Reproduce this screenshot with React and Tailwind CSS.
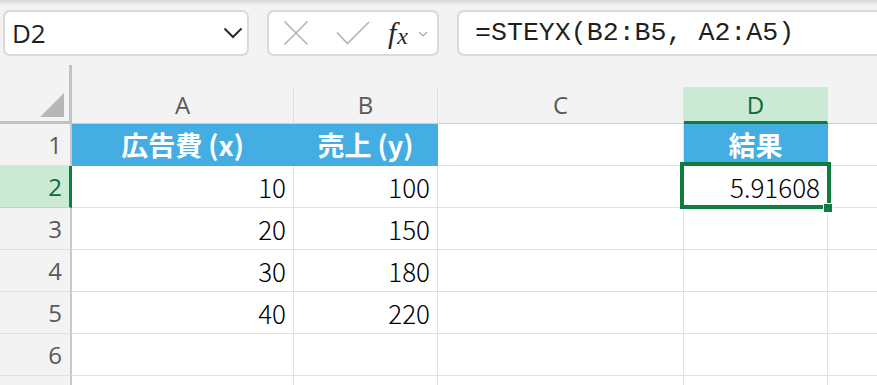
const UI_FONT = "font-['Open_Sans','Noto_Sans',sans-serif]";
const CELL_FONT = "font-['Noto_Sans_CJK_JP','Noto_Sans',sans-serif]";

const columns = [
  { key: "A", width: "w-[222px]" },
  { key: "B", width: "w-[144px]" },
  { key: "C", width: "w-[246px]" },
  { key: "D", width: "w-[144px]" },
  { key: "E", width: "w-[144px]", hidden: true },
];

// 表のデータ（1行目は見出し）
const rows = [
  { n: 1, cells: { A: "広告費 (x)", B: "売上 (y)", D: "結果" }, head: ["A", "B", "D"] },
  { n: 2, cells: { A: "10", B: "100", D: "5.91608" } },
  { n: 3, cells: { A: "20", B: "150" } },
  { n: 4, cells: { A: "30", B: "180" } },
  { n: 5, cells: { A: "40", B: "220" } },
  { n: 6, cells: {} },
  { n: 7, cells: {}, hidden: true },
];

const activeCol = "D";
const activeRow = 2;

function NameBox() {
  return (
    <div className="w-[246px] shrink-0 h-[46px] bg-white border-2 border-[#dadada] rounded-[7px] flex items-center justify-between pl-[7px] pr-[4px]">
      <span className={`${UI_FONT} text-[26px] text-[#1f1f1f] leading-none`}>D2</span>
      <svg width="20" height="12" viewBox="0 0 20 12">
        <polyline points="1.5,1.5 10,10 18.5,1.5" fill="none" stroke="#2b2b2b" strokeWidth="2" />
      </svg>
    </div>
  );
}

function FxBox() {
  return (
    <div className="ml-[18px] w-[172px] shrink-0 h-[46px] bg-white border-2 border-[#dadada] rounded-[7px] flex items-center">
      <svg className="ml-[14px] shrink-0" width="26" height="26" viewBox="0 0 26 26">
        <path d="M1.5 1.5 L24.5 24.5 M24.5 1.5 L1.5 24.5" stroke="#b3b3b3" strokeWidth="1.6" fill="none" />
      </svg>
      <svg className="ml-[27px] shrink-0" width="34" height="24" viewBox="0 0 34 24">
        <polyline points="1,11.5 11.5,22.5 33,1" fill="none" stroke="#b3b3b3" strokeWidth="1.6" />
      </svg>
      <span className="ml-[18px] flex items-end font-['Liberation_Serif',serif] italic text-[#262626] leading-none">
        <span className="text-[30px]">f</span>
        <span className="text-[24px] ml-[1px]">x</span>
      </span>
      <svg className="ml-[10px] mt-[2px] shrink-0" width="10" height="6" viewBox="0 0 10 6">
        <polyline points="1,1 5,5 9,1" fill="none" stroke="#a8a8a8" strokeWidth="1.2" />
      </svg>
    </div>
  );
}

function FormulaBox() {
  return (
    <div className="ml-[18px] w-[440px] shrink-0 h-[46px] bg-white border-2 border-[#dadada] rounded-[7px] flex items-center pl-[16px]">
      <span className="font-['Liberation_Mono',monospace] text-[26.6px] text-[#1f1f1f] leading-none whitespace-pre">
        =STEYX(B2:B5, A2:A5)
      </span>
    </div>
  );
}

function ColumnHeaders() {
  return (
    <div className="flex h-[59px]">
      <div className="w-[72px] shrink-0 h-[59px] border-r-[3px] border-b-[3px] border-[#c2c2c2] flex items-end justify-end pr-[5px] pb-[4px]">
        <svg width="24" height="24" viewBox="0 0 24 24">
          <polygon points="24,0 24,24 0,24" fill="#b7b7b7" />
        </svg>
      </div>
      {columns.map((c) => {
        const active = c.key === activeCol;
        return (
          <div key={c.key} className={`${c.width} shrink-0 h-[59px] flex items-end`}>
            <div
              className={`w-full h-[37px] border-r border-r-[#e0e0e0] flex items-center justify-center ${UI_FONT} text-[24px] leading-none ${
                active
                  ? "bg-[#caead6] border-b-[3px] border-b-[#107c41] text-[#0e6b38] pt-[2px]"
                  : "border-b border-b-[#cdcdcd] text-[#595959]"
              }`}
            >
              {c.hidden ? "" : c.key}
            </div>
          </div>
        );
      })}
    </div>
  );
}

function Cell({ col, row }) {
  const value = row.cells[col.key];
  const isHead = row.head && row.head.includes(col.key);
  const isActive = col.key === activeCol && row.n === activeRow;

  if (isHead) {
    return (
      <div
        className={`${col.width} shrink-0 h-[42px] bg-[#44aee2] border-r border-b border-[#44aee2] flex items-center justify-center ${CELL_FONT} font-bold text-[27px] text-white leading-none`}
      >
        {value}
      </div>
    );
  }

  return (
    <div
      className={`${col.width} shrink-0 h-[42px] bg-white border-r border-b border-[#e1e1e1] flex items-center justify-end pr-[7px] ${CELL_FONT} font-light text-[26px] text-black leading-none ${
        isActive ? "relative z-10" : ""
      }`}
    >
      {value}
      {isActive && (
        <>
          <div className="absolute left-[-4px] top-[-4px] w-[151px] h-[47px] border-[4px] border-[#107c41]" />
          <div className="absolute left-[139px] top-[37px] w-[10px] h-[10px] bg-white p-[1px]">
            <div className="w-full h-full bg-[#107c41]" />
          </div>
        </>
      )}
    </div>
  );
}

function Row({ row }) {
  const active = row.n === activeRow;
  return (
    <div className="flex">
      <div
        className={`w-[72px] shrink-0 h-[42px] border-b flex items-center justify-end ${UI_FONT} text-[24px] leading-none ${
          active
            ? "bg-[#caead6] border-b-[#b5dcc3] border-r-[3px] border-r-[#107c41] text-[#0e6b38] pr-[7px]"
            : "bg-[#f3f3f3] border-b-[#e1e1e1] border-r-2 border-r-[#c8c8c8] text-[#595959] pr-[8px]"
        }`}
      >
        {row.hidden ? "" : row.n}
      </div>
      {columns.map((c) => (
        <Cell key={c.key} col={c} row={row} />
      ))}
    </div>
  );
}

export default function App() {
  return (
    <div className="w-[877px] h-[385px] overflow-hidden bg-[#f3f3f3] flex flex-col">
      <div className="h-[6px] shrink-0 bg-gradient-to-b from-[#d8d8d8] to-[#f3f3f3]" />
      <div className="flex items-start pl-[3px] pt-[4px] h-[59px] shrink-0">
        <NameBox />
        <FxBox />
        <FormulaBox />
      </div>
      <ColumnHeaders />
      {rows.map((r) => (
        <Row key={r.n} row={r} />
      ))}
    </div>
  );
}
